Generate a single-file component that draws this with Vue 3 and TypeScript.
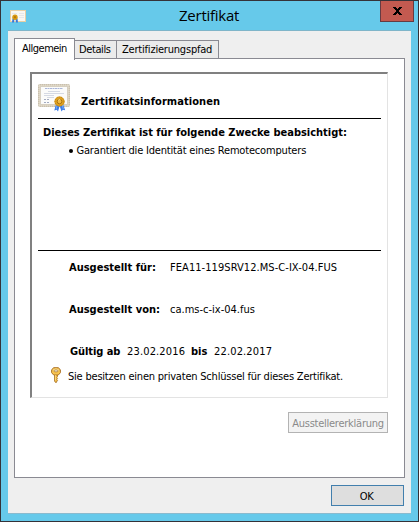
<script setup lang="ts">
import { ref } from 'vue'

interface Tab { id: string; label: string }

const tabs: Tab[] = [
  { id: 'general', label: 'Allgemein' },
  { id: 'details', label: 'Details' },
  { id: 'path', label: 'Zertifizierungspfad' },
]
const active = ref('general')

const cert = {
  issuedTo: 'FEA11-119SRV12.MS-C-IX-04.FUS',
  issuedBy: 'ca.ms-c-ix-04.fus',
  from: '23.02.2016',
  to: '22.02.2017',
}
</script>

<template>
  <div class="window">
    <header class="titlebar">
      <svg class="app-icon" viewBox="0 0 16 14">
        <rect x=".5" y=".5" width="15" height="11" fill="#f8f7f2" stroke="#e8cfa4" />
        <path d="M2 3.5h5M9 3.5h5M9 5.5h5M9 7.5h5" stroke="#e5e7ea" />
        <path d="M3.5 8.5 3 12.5M6.5 8.5 7 12.5" stroke="#3978d8" stroke-width="2" />
        <circle cx="5" cy="7.2" r="2.7" fill="#d89a12" />
        <circle cx="5" cy="7.2" r="1.1" fill="#b97908" />
      </svg>
      <h1>Zertifikat</h1>
      <button class="close" aria-label="Schließen">
        <svg viewBox="0 0 9 8" shape-rendering="crispEdges">
          <path d="M0 0h3v1h1v1h1V1h1V0h3v1H8v1H7v1H6v2h1v1h1v1h1v1H6V7H5V6H4v1H3v1H0V7h1V6h1V5h1V3H2V2H1V1H0z" fill="#000" />
        </svg>
      </button>
    </header>

    <main class="client">
      <nav class="tabs">
        <button
          v-for="t in tabs"
          :key="t.id"
          class="tab"
          :class="[t.id, { active: active === t.id }]"
          @click="active = t.id"
        >{{ t.label }}</button>
      </nav>

      <section class="page">
        <div class="sheet">
          <div class="heading">
            <svg class="cert-icon" viewBox="0 0 32 28">
              <rect x=".5" y=".5" width="31" height="22" rx="1" fill="#d9d0bd" stroke="#c9c0ad" />
              <rect x="1" y="1" width="30" height="21" fill="none" stroke="#e9e3d6" stroke-dasharray="1 1" />
              <rect x="2.5" y="2.5" width="27" height="18" fill="#fbfbfa" stroke="#d6cfc0" />
              <path d="M7 4.5h18" stroke="#aab6d8" stroke-dasharray="2 .5" />
              <path d="M10 7.5h12M6 9.5h20M6 11.5h10M9 13.5h7" stroke="#d5d9e3" />
              <path d="M6 15.5h6M6 18.5h6" stroke="#a3abc0" stroke-dasharray="2 1" />
              <path d="M18 20 16.3 26.6l2.4-.8 1.3 1.7 1.8-6zM25 20l2.2 6.3-2.4-.6-1.3 1.8-2-6z" fill="#3b7ce8" />
              <path d="m19.2 21-1 4M24.3 21l1 4" stroke="#79acf5" />
              <circle cx="21.5" cy="17.5" r="5.1" fill="#dda021" />
              <circle cx="21.5" cy="17.5" r="4.5" fill="none" stroke="#c48410" stroke-dasharray="1.2 1" />
              <circle cx="21.5" cy="17.5" r="2.3" fill="#efb942" stroke="#aa7311" />
              <path d="M20 16.5q1-1.5 2.4-1" fill="none" stroke="#ffe391" stroke-width=".8" />
            </svg>
            <h2>Zertifikatsinformationen</h2>
          </div>
          <div class="purposes">
            <strong>Dieses Zertifikat ist für folgende Zwecke beabsichtigt:</strong>
            <ul>
              <li><i class="dot"></i><span>Garantiert die Identität eines Remotecomputers</span></li>
            </ul>
          </div>
          <dl class="subject">
            <dt>Ausgestellt für:</dt>
            <dd class="to">{{ cert.issuedTo }}</dd>
            <dt>Ausgestellt von:</dt>
            <dd class="by">{{ cert.issuedBy }}</dd>
          </dl>
          <p class="validity">
            <b class="since">Gültig ab</b><span class="date">{{ cert.from }}</span>
            <b class="until">bis</b><span class="date">{{ cert.to }}</span>
          </p>
          <p class="key">
            <svg viewBox="0 0 10 17">
              <path d="M3.6 7.5h2.9v2l-.8.8.8 1-.8 1 .8 1-1.5 2.5-1.4-1.6z" fill="#f2b83d" stroke="#a8732a" stroke-width=".9" />
              <path d="M2.5.7h5L9.4 3v2.7L7.3 8H2.7L.6 5.7V3z" fill="#f7c450" stroke="#ad752b" />
              <path d="M2.1 3.2Q5 .8 7.9 3.2" fill="none" stroke="#ffe9a3" />
              <rect x="3.1" y="3" width="3.8" height="1.8" rx=".8" fill="#fff" stroke="#9c6a2a" stroke-width=".7" />
              <path d="M4.6 8v5.5" stroke="#ffe28b" stroke-width=".8" />
            </svg>
            <span>Sie besitzen einen privaten Schlüssel für dieses Zertifikat.</span>
          </p>
        </div>
        <button class="statement" disabled>Ausstellererklärung</button>
      </section>

      <footer><button class="ok">OK</button></footer>
    </main>
  </div>
</template>

<style>
body { margin: 0; overflow: hidden; }
</style>

<style scoped>
* { box-sizing: border-box; }
h1, h2, p, ul, dl, dd { margin: 0; padding: 0; }
svg { display: block; flex: none; }
button { font: inherit; color: #000; padding: 0; margin: 0; border-radius: 0; white-space: nowrap; }

.window {
  width: 419px;
  height: 522px;
  padding: 0 7px 7px;
  border: 1px solid #353238;
  background: #66c9ea;
  color: #000;
  font: 11px/14px "DejaVu Sans Condensed", "DejaVu Sans", sans-serif;
  white-space: nowrap;
}

.titlebar { display: flex; align-items: flex-start; height: 29px; }
.app-icon { width: 16px; height: 14px; margin: 9px 0 0 2px; }
h1 {
  flex: 1;
  padding-left: 153px;
  font: 400 15px/20px "Open Sans", "Noto Sans", sans-serif;
  letter-spacing: -0.25px;
  margin-top: 4px;
}
.close {
  display: flex;
  align-items: center;
  justify-content: center;
  width: 34px;
  height: 21px;
  margin-right: -3px;
  background: #c35a50;
  border: 1px solid #663b42;
  border-top: 0;
}
.close svg { width: 9px; height: 8px; }

.client {
  height: 484px;
  padding: 7px 6px 0;
  background: #efefef;
  border-top: 1px solid #7fb5c9;
  border-bottom: 1px solid #8abace;
}

.tabs { display: flex; align-items: flex-end; height: 20px; }
.tab {
  height: 18px;
  border: 1px solid #8a8a92;
  border-left: 0;
  border-bottom: 0;
  background: #ebebeb;
  text-align: left;
  line-height: 16px;
  padding: 1px 0 0 4px;
}
.tab.general { width: 61px; padding-left: 7px; letter-spacing: -0.5px; }
.tab.details { width: 42px; letter-spacing: -0.4px; }
.tab.path { width: 102px; padding-left: 5px; letter-spacing: -0.2px; }
.tab.active {
  z-index: 1;
  height: 22px;
  margin-bottom: -2px;
  border-left: 1px solid #8a8a92;
  background: #fff;
  line-height: 14px;
  padding-bottom: 3px;
}

.page {
  display: flex;
  flex-direction: column;
  align-items: flex-end;
  height: 420px;
  padding: 13px 16px 0 15px;
  background: #fff;
  border: 1px solid #8a8a92;
}
.sheet {
  width: 358px;
  height: 326px;
  padding: 10px 6px 0;
  border: 2px solid;
  border-width: 2px 1px 1px 2px;
  border-color: #808080 #e3e3e3 #e3e3e3 #808080;
}
.heading {
  display: flex;
  width: 343px;
  height: 35px;
  border-bottom: 1px solid #000;
}
.cert-icon { width: 32px; height: 28px; }
h2 { font: inherit; font-weight: 700; margin: 11px 0 0 11px; letter-spacing: 0.06px; }

.purposes { width: 343px; height: 132px; padding: 7px 0 0 5px; border-bottom: 1px solid #000; }
.purposes strong { display: block; letter-spacing: -0.02px; }
ul { list-style: none; padding: 4px 0 0 26px; }
li { display: flex; align-items: center; letter-spacing: -0.18px; }
.dot { width: 4px; height: 4px; border-radius: 50%; background: #000; margin-right: 3.5px; }

.subject {
  display: grid;
  grid-template-columns: 101px auto;
  grid-auto-rows: 42px;
  padding: 10px 0 0 31px;
}
dt { font-weight: 700; }
.to { letter-spacing: 0.06px; }
.by { letter-spacing: 0; }

.validity { display: flex; padding-left: 32px; }
.since { width: 57px; letter-spacing: -0.08px; }
.until { width: 23px; }
.date { width: 64px; letter-spacing: 0.15px; }

.key { display: flex; padding: 8px 0 0 13px; letter-spacing: -0.21px; }
.key svg { width: 10px; height: 17px; }
.key span { margin: 3px 0 0 7px; }

.statement {
  width: 100px;
  height: 21px;
  margin-top: 14px;
  padding-top: 2px;
  background: #f3f3f3;
  border: 1px solid #b3b3b3;
  color: #8a8a8a;
  letter-spacing: -0.25px;
}

footer { display: flex; justify-content: flex-end; padding: 7px 1px 0 0; }
.ok {
  width: 73px;
  height: 21px;
  padding: 2px 2px 0 0;
  background: #dedede;
  border: 1px solid #427fad;
  letter-spacing: -0.5px;
}
</style>
